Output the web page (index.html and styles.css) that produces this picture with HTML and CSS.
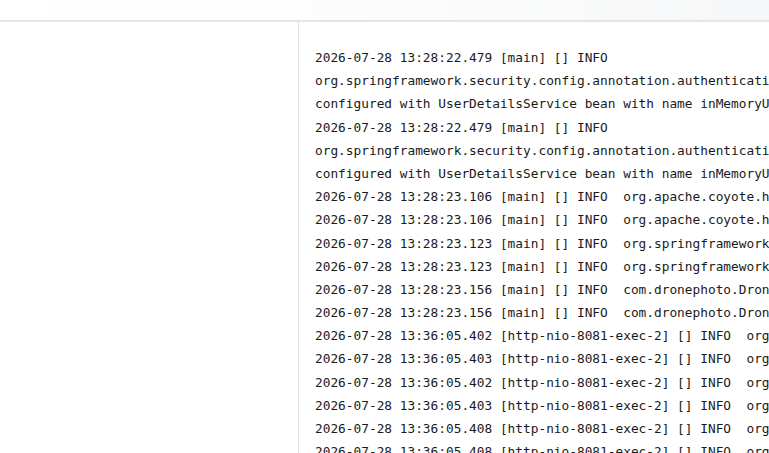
FILE: index.html
```html
<!DOCTYPE html>
<html>
<head>
<meta charset="utf-8">
<link rel="stylesheet" href="styles.css">
</head>
<body>
<header class="topbar"></header>
<div class="layout">
  <aside class="sidebar"></aside>
  <main class="log-panel">
<pre class="log">2026-07-28 13:28:22.479 [main] [] INFO
org.springframework.security.config.annotation.authentication.configuration.InitializeUserDetailsBeanManagerConfigurer$InitializeUserDetailsManagerConfigurer -- Global AuthenticationManager
configured with UserDetailsService bean with name inMemoryUserDetailsManager
2026-07-28 13:28:22.479 [main] [] INFO
org.springframework.security.config.annotation.authentication.configuration.InitializeUserDetailsBeanManagerConfigurer$InitializeUserDetailsManagerConfigurer -- Global AuthenticationManager
configured with UserDetailsService bean with name inMemoryUserDetailsManager
2026-07-28 13:28:23.106 [main] [] INFO  org.apache.coyote.http11.Http11NioProtocol - Starting ProtocolHandler ["http-nio-8081"]
2026-07-28 13:28:23.106 [main] [] INFO  org.apache.coyote.http11.Http11NioProtocol - Starting ProtocolHandler ["http-nio-8081"]
2026-07-28 13:28:23.123 [main] [] INFO  org.springframework.boot.web.embedded.tomcat.TomcatWebServer - Tomcat started on port 8081 (http)
2026-07-28 13:28:23.123 [main] [] INFO  org.springframework.boot.web.embedded.tomcat.TomcatWebServer - Tomcat started on port 8081 (http)
2026-07-28 13:28:23.156 [main] [] INFO  com.dronephoto.DronephotoApplication - Started DronephotoApplication in 3.412 seconds
2026-07-28 13:28:23.156 [main] [] INFO  com.dronephoto.DronephotoApplication - Started DronephotoApplication in 3.412 seconds
2026-07-28 13:36:05.402 [http-nio-8081-exec-2] [] INFO  org.apache.catalina.core.ContainerBase - Initializing Spring DispatcherServlet
2026-07-28 13:36:05.403 [http-nio-8081-exec-2] [] INFO  org.springframework.web.servlet.DispatcherServlet - Initializing Servlet
2026-07-28 13:36:05.402 [http-nio-8081-exec-2] [] INFO  org.apache.catalina.core.ContainerBase - Initializing Spring DispatcherServlet
2026-07-28 13:36:05.403 [http-nio-8081-exec-2] [] INFO  org.springframework.web.servlet.DispatcherServlet - Initializing Servlet
2026-07-28 13:36:05.408 [http-nio-8081-exec-2] [] INFO  org.springframework.web.servlet.DispatcherServlet - Completed initialization
2026-07-28 13:36:05.408 [http-nio-8081-exec-2] [] INFO  org.springframework.web.servlet.DispatcherServlet - Completed initialization</pre>
  </main>
</div>
</body>
</html>
```
FILE: styles.css
```css
html, body {
  margin: 0;
  padding: 0;
  height: 100%;
  overflow: hidden;
  background: #ffffff;
}

.topbar {
  height: 20px;
  background: linear-gradient(to right, #ffffff 0%, #fdfdfd 40%, #f6f7f8 100%);
  border-bottom: 2px solid #e5e6ec;
}

.layout {
  display: flex;
  height: calc(100% - 22px);
}

.sidebar {
  width: 298px;
  flex: none;
  border-right: 1px solid #e3e5ea;
  background: #ffffff;
}

.log-panel {
  flex: 1;
  min-width: 0;
  overflow: hidden;
  padding: 24px 0 0 16px;
}

.log {
  margin: 0;
  font-family: "DejaVu Sans Mono", "Liberation Mono", monospace;
  font-size: 12.8px;
  line-height: 23.18px;
  color: #1a1a1a;
  white-space: pre;
}
```
